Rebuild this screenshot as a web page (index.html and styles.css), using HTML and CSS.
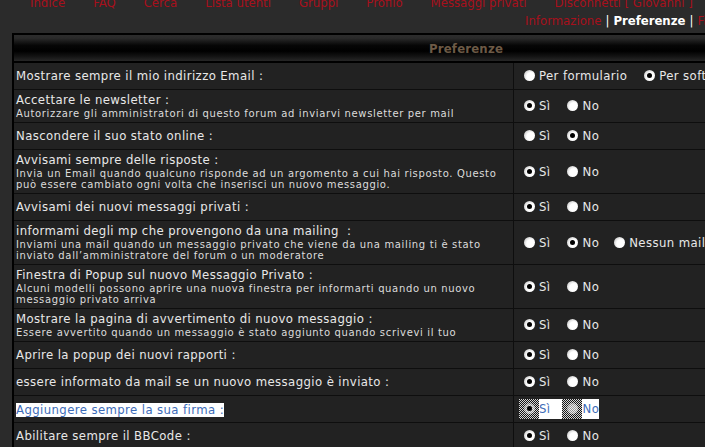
FILE: index.html
```html
<!DOCTYPE html>
<html lang="it">
<head>
<meta charset="utf-8">
<title>Preferenze</title>
<link rel="stylesheet" href="styles.css">
</head>
<body>
<div class="page">
  <nav class="nav">
    <div class="nav-main">
      <a href="#">Indice</a>
      <a href="#">FAQ</a>
      <a href="#">Cerca</a>
      <a href="#">Lista utenti</a>
      <a href="#">Gruppi</a>
      <a href="#">Profilo</a>
      <a href="#">Messaggi privati</a>
      <a href="#">Disconnetti [ Giovanni ]</a>
    </div>
    <div class="nav-sub">
      <a href="#">Informazione</a><span class="sep">|</span><b class="current">Preferenze</b><span class="sep">|</span><a href="#">Firma</a>
    </div>
  </nav>

  <table class="prefs">
    <colgroup><col class="c1"><col class="c2"></colgroup>
    <thead>
      <tr><th colspan="2" class="head">Preferenze</th></tr>
    </thead>
    <tbody>
      <tr>
        <td class="label"><span class="t">Mostrare sempre il mio indirizzo Email :</span></td>
        <td class="opt"><span class="radio"></span><span class="lbl">Per formulario</span><span class="radio on"></span><span class="lbl last">Per software</span></td>
      </tr>
      <tr>
        <td class="label"><span class="t">Accettare le newsletter :</span><span class="d">Autorizzare gli amministratori di questo forum ad inviarvi newsletter per mail</span></td>
        <td class="opt"><span class="radio on"></span><span class="lbl">Sì</span><span class="radio"></span><span class="lbl last">No</span></td>
      </tr>
      <tr>
        <td class="label"><span class="t">Nascondere il suo stato online :</span></td>
        <td class="opt"><span class="radio"></span><span class="lbl">Sì</span><span class="radio on"></span><span class="lbl last">No</span></td>
      </tr>
      <tr>
        <td class="label"><span class="t">Avvisami sempre delle risposte :</span><span class="d">Invia un Email quando qualcuno risponde ad un argomento a cui hai risposto. Questo<br>può essere cambiato ogni volta che inserisci un nuovo messaggio.</span></td>
        <td class="opt"><span class="radio on"></span><span class="lbl">Sì</span><span class="radio"></span><span class="lbl last">No</span></td>
      </tr>
      <tr>
        <td class="label"><span class="t">Avvisami dei nuovi messaggi privati :</span></td>
        <td class="opt"><span class="radio on"></span><span class="lbl">Sì</span><span class="radio"></span><span class="lbl last">No</span></td>
      </tr>
      <tr>
        <td class="label"><span class="t">informami degli mp che provengono da una mailing &nbsp;:</span><span class="d">Inviami una mail quando un messaggio privato che viene da una mailing ti è stato<br>inviato dall’amministratore del forum o un moderatore</span></td>
        <td class="opt"><span class="radio"></span><span class="lbl">Sì</span><span class="radio on"></span><span class="lbl short">No</span><span class="radio"></span><span class="lbl last">Nessun mailing</span></td>
      </tr>
      <tr>
        <td class="label"><span class="t">Finestra di Popup sul nuovo Messaggio Privato :</span><span class="d">Alcuni modelli possono aprire una nuova finestra per informarti quando un nuovo<br>messaggio privato arriva</span></td>
        <td class="opt"><span class="radio on"></span><span class="lbl">Sì</span><span class="radio"></span><span class="lbl last">No</span></td>
      </tr>
      <tr>
        <td class="label"><span class="t">Mostrare la pagina di avvertimento di nuovo messaggio :</span><span class="d">Essere avvertito quando un messaggio è stato aggiunto quando scrivevi il tuo</span></td>
        <td class="opt"><span class="radio on"></span><span class="lbl">Sì</span><span class="radio"></span><span class="lbl last">No</span></td>
      </tr>
      <tr>
        <td class="label"><span class="t">Aprire la popup dei nuovi rapporti :</span></td>
        <td class="opt"><span class="radio on"></span><span class="lbl">Sì</span><span class="radio"></span><span class="lbl last">No</span></td>
      </tr>
      <tr>
        <td class="label"><span class="t">essere informato da mail se un nuovo messaggio è inviato :</span></td>
        <td class="opt"><span class="radio on"></span><span class="lbl">Sì</span><span class="radio"></span><span class="lbl last">No</span></td>
      </tr>
      <tr class="selected">
        <td class="label"><span class="t hl">Aggiungere sempre la sua firma :</span></td>
        <td class="opt"><span class="radio on dither"></span><span class="lbl hl">Sì</span><span class="radio dither"></span><span class="lbl last hl">No</span></td>
      </tr>
      <tr>
        <td class="label"><span class="t">Abilitare sempre il BBCode :</span></td>
        <td class="opt"><span class="radio on"></span><span class="lbl">Sì</span><span class="radio"></span><span class="lbl last">No</span></td>
      </tr>
    </tbody>
  </table>
</div>
</body>
</html>
```

FILE: styles.css
```css
html, body {
  margin: 0;
  padding: 0;
  overflow: hidden;
  background: #2b2b2b;
}

body {
  width: 705px;
  height: 447px;
  font-family: "DejaVu Sans Condensed", "DejaVu Sans", sans-serif;
  font-size: 13px;
  color: #e6e6e6;
}

.page {
  width: 940px;
}

/* navigation */
.nav {
  margin-top: -6px;
  line-height: 18px;
  white-space: nowrap;
}

.nav a {
  color: #a8101c;
  text-decoration: none;
}

.nav-main {
  display: flex;
  gap: 28px;
  padding-left: 30px;
}

.nav-sub {
  padding-left: 525px;
}

.sep {
  color: #ffffff;
  margin: 0 4px;
}

.current {
  color: #ffffff;
  font-weight: bold;
}

/* table */
.prefs {
  box-sizing: border-box;
  width: 908px;
  margin: 3px 0 0 12px;
  border: 2px solid #000;
  border-collapse: separate;
  border-spacing: 0;
  table-layout: fixed;
  background: #222222;
}

.c1 { width: 500px; }
.c2 { width: 404px; }

.head {
  box-sizing: border-box;
  height: 28px;
  padding: 0;
  border-bottom: 2px solid #000;
  background: linear-gradient(to bottom, #2c2c2c 0, #2a2a2a 12%, #060606 40%, #000 62%, #161616 85%, #272727 100%);
  color: #6d5a46;
  font-weight: bold;
  font-size: 13px;
  letter-spacing: 0.2px;
  text-align: center;
  vertical-align: middle;
}

.prefs td {
  box-sizing: border-box;
  border-bottom: 1px solid #0e0e0e;
  vertical-align: middle;
}

.label {
  padding: 2px 3px 2px 2px;
  border-right: 1px solid #0e0e0e;
}

.t {
  display: inline-block;
  line-height: 16px;
  letter-spacing: 0.4px;
  color: #e8e8e8;
}

.d {
  display: block;
  white-space: nowrap;
  font-family: "DejaVu Sans", sans-serif;
  font-size: 10px;
  line-height: 11px;
  letter-spacing: 0.65px;
  color: #dcdcdc;
  padding-bottom: 1px;
}

.opt {
  padding: 3px 5px;
  white-space: nowrap;
  line-height: 20px;
}

.radio {
  position: relative;
  display: inline-block;
  width: 20px;
  height: 20px;
  vertical-align: top;
}

.radio::before {
  content: "";
  position: absolute;
  left: 5px;
  top: 4px;
  width: 11px;
  height: 11px;
  border-radius: 50%;
  background: radial-gradient(circle at 62% 60%, #ffffff 0, #ffffff 42%, #dadada 68%, #8e8e8e 100%);
}

.radio.on::after {
  content: "";
  position: absolute;
  left: 8px;
  top: 7px;
  width: 5px;
  height: 5px;
  border-radius: 50%;
  background: #000;
}

.radio.dither {
  background: repeating-conic-gradient(#151515 0 25%, #d6d6d6 0 50%) 0 0 / 2px 2px;
}

.radio.dither::before {
  opacity: 0.55;
}

.lbl {
  display: inline-block;
  vertical-align: top;
  padding-right: 12px;
  letter-spacing: 0.4px;
  color: #e8e8e8;
}

.lbl.short {
  padding-right: 10px;
}

.lbl.last {
  padding-right: 0;
}

.hl {
  background: #ffffff;
  color: #3d6cb8;
}

.t.hl {
  line-height: 14px;
}
```
